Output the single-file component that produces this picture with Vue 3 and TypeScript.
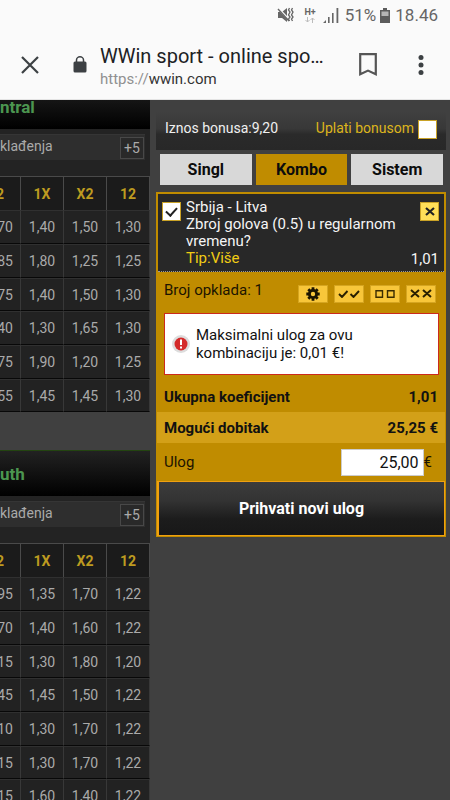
<script setup lang="ts">
import { ref } from 'vue'

interface Market {
  title: string
  rows: string[][]
}

const heads: string[] = ['2', '1X', 'X2', '12']

const markets: Market[] = [
  {
    title: 'ntral',
    rows: [
      ['70', '1,40', '1,50', '1,30'],
      ['85', '1,80', '1,25', '1,25'],
      ['75', '1,40', '1,50', '1,30'],
      ['40', '1,30', '1,65', '1,30'],
      ['75', '1,90', '1,20', '1,25'],
      ['55', '1,45', '1,45', '1,30'],
    ],
  },
  {
    title: 'uth',
    rows: [
      ['95', '1,35', '1,70', '1,22'],
      ['70', '1,40', '1,60', '1,22'],
      ['15', '1,30', '1,80', '1,20'],
      ['45', '1,45', '1,50', '1,22'],
      ['10', '1,30', '1,70', '1,22'],
      ['15', '1,30', '1,70', '1,22'],
      ['15', '1,60', '1,40', '1,22'],
    ],
  },
]

const tabs: string[] = ['Singl', 'Kombo', 'Sistem']
const activeTab = ref('Kombo')
const useBonus = ref(false)
const selected = ref(true)
const stake = ref('25,00')
</script>

<template>
  <div class="screen">
    <header class="top">
      <div class="status">
        <svg class="mute" width="17" height="16" viewBox="0 0 17 16">
          <path d="M1 5h4l5-4v14l-5-4H1z" fill="#666" />
          <path d="M1 1l12 13" stroke="#fafafa" stroke-width="2.4" />
          <path d="M1 2l11 12" stroke="#666" stroke-width="1.4" />
          <path d="M12.500 1l-1 2 1.500 2-1.500 3 1.500 2-1.500 2 1 2M15.500 1l-1 2 1.500 2-1.500 3 1.500 2-1.500 2 1 2" fill="none" stroke="#666" stroke-width="1.300" />
        </svg>
        <span class="net">
          <b>H+</b>
          <svg width="10" height="6" viewBox="0 0 10 6">
            <path d="M2.500 0v5M.5 3l2 2 2-2M7.500 6V1M5.500 3l2-2 2 2" fill="none" stroke="#bbb" />
          </svg>
        </span>
        <svg class="signal" width="16" height="15" viewBox="0 0 16 15">
          <path d="M0 15l3-3v3zM5 9h1.600v6H5zM9 5h1.600v10H9zM13.500 0h1.800v15h-1.800z" fill="#666" />
        </svg>
        <span class="pct">51%</span>
        <svg class="battery" width="10" height="15" viewBox="0 0 10 15">
          <path d="M3 0h4v2h3v13H0V2h3z" fill="#5c5c5c" />
          <path d="M1.500 3.500h7V8h-7z" fill="#b5b5b5" />
        </svg>
        <span>18.46</span>
      </div>
      <div class="bar">
        <button class="icon close" type="button" aria-label="Zatvori">
          <svg width="18" height="18" viewBox="0 0 18 18">
            <path d="M1 1l16 16M17 1L1 17" stroke="#3c4043" stroke-width="2.200" />
          </svg>
        </button>
        <svg class="lock" width="14" height="17" viewBox="0 0 14 17">
          <path d="M3.500 7V4a3.500 3.200 0 0 1 7 0v3" fill="none" stroke="#3c4043" stroke-width="1.500" />
          <rect x=".5" y="5.500" width="13" height="11" rx="1.500" fill="#3c4043" />
        </svg>
        <div class="page">
          <div class="title">WWin sport - online spo…</div>
          <div class="url"><span>https://</span>wwin.com</div>
        </div>
        <button class="icon mark" type="button" aria-label="Oznaka">
          <svg width="18" height="23" viewBox="0 0 18 23">
            <path d="M1.200 1.200h15.600v20L9 17.600l-7.800 3.600z" fill="none" stroke="#555" stroke-width="2.200" />
          </svg>
        </button>
        <button class="icon more" type="button" aria-label="Izbornik">
          <svg width="6" height="20" viewBox="0 0 6 20">
            <circle cx="3" cy="2.500" r="2.500" fill="#3c4043" />
            <circle cx="3" cy="10" r="2.500" fill="#3c4043" />
            <circle cx="3" cy="17.500" r="2.500" fill="#3c4043" />
          </svg>
        </button>
      </div>
    </header>

    <main class="body">
      <section class="offers">
        <article v-for="m in markets" :key="m.title" class="market">
          <h2>{{ m.title }}</h2>
          <div class="sub">
            <span>klađenja</span>
            <button type="button">+5</button>
          </div>
          <table>
            <thead>
              <tr>
                <th v-for="h in heads" :key="h">{{ h }}</th>
              </tr>
            </thead>
            <tbody>
              <tr v-for="(r, i) in m.rows" :key="i">
                <td v-for="(c, j) in r" :key="j">{{ c }}</td>
              </tr>
            </tbody>
          </table>
        </article>
      </section>

      <aside class="side">
        <div class="bonus">
          <span>Iznos bonusa:9,20</span>
          <label><span>Uplati bonusom</span><input v-model="useBonus" type="checkbox" class="box" /></label>
        </div>
        <nav class="tabs">
          <button
            v-for="t in tabs"
            :key="t"
            type="button"
            :class="{ active: t === activeTab }"
            @click="activeTab = t"
          >{{ t }}</button>
        </nav>

        <div class="slip">
          <div class="bet">
            <input id="pick" v-model="selected" type="checkbox" class="box" />
            <label for="pick" class="text">
              Srbija - Litva<br />Zbroj golova (0.5) u regularnom vremenu?<br /><em>Tip:Više</em>
            </label>
            <div class="end">
              <button type="button" aria-label="Ukloni">
                <svg width="10" height="9" viewBox="0 0 10 9">
                  <path d="M1 1l8 7M9 1L1 8" stroke="#222" stroke-width="2.200" />
                </svg>
              </button>
              <span>1,01</span>
            </div>
          </div>

          <div class="count">
            <span>Broj opklada: 1</span>
            <div class="tools">
              <button type="button" aria-label="Postavke">
                <svg width="14" height="14" viewBox="-7 -7 14 14">
                  <circle r="3.600" fill="none" stroke="#1c1400" stroke-width="2.800" />
                  <path d="M0-6.700V-4M0 6.700V4M-6.700 0H-4M6.700 0H4M-4.700-4.700L-3-3M4.700 4.700L3 3M-4.700 4.700L-3 3M4.700-4.700L3-3" stroke="#1c1400" stroke-width="2.800" />
                </svg>
              </button>
              <button type="button" aria-label="Označi sve">
                <svg width="22" height="8" viewBox="0 0 22 8">
                  <path d="M1 4l3 3 5.500-6M12.500 4l3 3L21 1" fill="none" stroke="#2a2000" stroke-width="1.900" />
                </svg>
              </button>
              <button type="button" aria-label="Poništi sve">
                <svg width="20" height="8" viewBox="0 0 20 8">
                  <path d="M1 .7h6.500v6.600H1zM12.500.7H19v6.600h-6.500z" fill="none" stroke="#3a2c00" stroke-width="1.400" />
                </svg>
              </button>
              <button type="button" aria-label="Ukloni sve">
                <svg width="22" height="9" viewBox="0 0 22 9">
                  <path d="M1 1l8 7M9 1L1 8M13 1l8 7M21 1l-8 7" stroke="#2a2000" stroke-width="2" />
                </svg>
              </button>
            </div>
          </div>

          <div class="alert" role="alert">
            <svg width="18" height="18" viewBox="0 0 18 18">
              <circle cx="9" cy="9" r="9" fill="#ddd" />
              <circle cx="9" cy="9" r="6.500" fill="#d42a2a" />
              <path d="M9 4.500v5.500M9 11.500v2" stroke="#fff" stroke-width="2" />
            </svg>
            <p>Maksimalni ulog za ovu kombinaciju je: 0,01 €!</p>
          </div>

          <div class="sum"><span>Ukupna koeficijent</span><span>1,01</span></div>
          <div class="sum light"><span>Mogući dobitak</span><span>25,25 €</span></div>
          <div class="stake">
            <label for="stake">Ulog</label>
            <input id="stake" v-model="stake" type="text" inputmode="decimal" />
            <span>€</span>
          </div>
          <button type="button" class="accept">Prihvati novi ulog</button>
        </div>
      </aside>
    </main>
  </div>
</template>

<style>
body {
  margin: 0;
  background: #404040;
}
</style>

<style scoped>
.screen {
  height: 100vh;
  overflow: hidden;
  display: flex;
  flex-direction: column;
  font-family: Roboto, 'Liberation Sans', sans-serif;
  font-size: 15px;
  background: #404040;
}
.screen * {
  box-sizing: border-box;
}
button,
input {
  font: inherit;
  margin: 0;
  padding: 0;
  border: 0;
  border-radius: 0;
}
svg {
  display: block;
  flex: none;
}
.top {
  flex: none;
  height: 100px;
  background: #fafafa;
  border-bottom: 1px solid #e4e4e4;
}
.status {
  height: 30px;
  padding-right: 12px;
  display: flex;
  justify-content: flex-end;
  align-items: center;
  font-size: 17px;
  color: #666;
}
.net {
  margin: 0 7px 0 10px;
  display: flex;
  flex-direction: column;
  align-items: center;
  font-size: 9px;
  line-height: 9px;
}
.pct {
  margin-left: 6px;
}
.battery {
  margin: 0 5px 0 4px;
}
.bar {
  height: 69px;
  display: flex;
  align-items: center;
  padding: 0 26px 0 21px;
}
.icon {
  background: none;
}
.lock {
  margin: 0 13px 0 34px;
}
.page {
  flex: 1;
  min-width: 0;
  padding-top: 4px;
  white-space: nowrap;
}
.title {
  font-size: 20px;
  line-height: 24px;
  color: #202124;
}
.url {
  font-size: 15px;
  line-height: 22px;
  color: #333;
}
.url span {
  color: #909090;
}
.more {
  margin-left: 41px;
}
.body {
  flex: 1;
  min-height: 0;
  display: grid;
  grid-template-columns: 1fr 2fr;
}
.offers {
  min-width: 0;
  overflow: hidden;
  display: flex;
  flex-direction: column;
  justify-content: flex-start;
  gap: 38px;
  color: #aaa;
  font-size: 14px;
}
.market {
  flex: none;
  background: #232323;
}
h2 {
  margin: 0;
  height: 46px;
  border-top: 1px solid #234410;
  background: linear-gradient(#222, #000);
  color: #4c9650;
  font-size: 17px;
  line-height: 46px;
  font-weight: 700;
}
.market:first-child h2 {
  height: 29px;
  border-top: 0;
  line-height: 14px;
  background: linear-gradient(#151515, #000);
}
.sub {
  height: 26px;
  margin: 5px 5px 16px 0;
  padding-right: 1px;
  display: flex;
  align-items: center;
  justify-content: space-between;
  background: #2e2e2e;
  border-top: 1px solid #353535;
}
.sub span {
  line-height: 22px;
  padding-bottom: 4px;
}
.sub button {
  width: 24px;
  height: 22px;
  border: 1px solid #484848;
  background: #292929;
  color: #aaa;
}
table {
  width: calc(100% + 22px);
  margin-left: -22px;
  table-layout: fixed;
  border-collapse: separate;
  border-spacing: 0;
  background: #222;
}
tr {
  height: 34px;
}
tbody tr:nth-child(3n) {
  height: 33px;
}
th,
td {
  padding: 0;
  text-align: center;
  border-right: 1px solid #383838;
  border-top: 1px solid #303030;
}
td {
  border-bottom: 1px solid #080808;
}
th {
  background: #1b1b1b;
  color: #bd9b20;
  font-weight: 700;
  border-top-color: #4a4a4a;
  border-right-color: #4a4a4a;
}
th:first-child,
td:first-child {
  text-align: right;
  padding-right: 7px;
}
th:first-child {
  padding-right: 16px;
}
.side {
  padding: 11px 4px 0 6px;
  min-width: 0;
}
.bonus {
  height: 39px;
  padding: 0 9px 2px;
  display: flex;
  align-items: center;
  justify-content: space-between;
  background: linear-gradient(#404040, #383838 45%, #2a2a2a 60%, #282828);
  color: #f0f0f0;
  font-size: 14px;
}
.bonus label {
  display: flex;
  align-items: center;
  gap: 4px;
  color: #ddb51c;
}
.bonus span {
  line-height: 18px;
  padding-bottom: 3px;
}
.box {
  appearance: none;
  flex: none;
  width: 19px;
  height: 19px;
  border: 1px solid #c9a227;
  background: #fff;
}
.box:checked {
  display: grid;
  place-items: center;
}
.box:checked::after {
  content: '';
  width: 5px;
  height: 9px;
  margin-bottom: 2px;
  border: solid #222;
  border-width: 0 2px 2px 0;
  transform: rotate(42deg);
}
.tabs {
  margin: 4px 3px 7px 4px;
  display: grid;
  grid-template-columns: repeat(3, 1fr);
  gap: 4px;
}
.tabs button {
  height: 31px;
  background: #d8d8d8;
  color: #0c0c0c;
  font-size: 16px;
  font-weight: 700;
}
.tabs button.active {
  background: #c08c00;
}
.slip {
  border: 1px solid #c08c00;
  background: #c08c00;
}
.bet {
  margin: 1px 1px 0;
  display: flex;
  padding: 3px 5px 2px 4px;
  background: #282828;
  border-bottom: 1px dotted #999;
  color: #f5f5f5;
  line-height: 17px;
}
.bet .box {
  margin: 5px 5px 0 0;
}
.bet .text {
  flex: 1;
  min-width: 0;
  padding: 2px 0;
}
.bet em {
  font-style: normal;
  color: #f1cc14;
}
.end {
  display: flex;
  flex-direction: column;
  justify-content: space-between;
  align-items: flex-end;
  padding: 5px 0 1px;
}
.end button {
  width: 19px;
  height: 19px;
  display: grid;
  place-items: center;
  background: #ffdf58;
  border: 1px solid #c9a227;
}
.count {
  height: 41px;
  padding: 0 9px 0 7px;
  display: flex;
  justify-content: space-between;
  color: #1c1400;
}
.count > span {
  line-height: 37px;
}
.tools {
  display: flex;
  align-items: center;
  gap: 6px;
  padding-top: 2px;
}
.tools button {
  width: 30px;
  height: 18px;
  display: grid;
  place-items: center;
  background: #f8c63a;
  border: 1px solid #d5a520;
}
.alert {
  margin: 0 6px 6px 7px;
  padding: 12px 7px;
  display: flex;
  align-items: center;
  gap: 5px;
  background: #fff;
  border: 1px solid #cc2a1c;
}
.alert p {
  flex: 1;
  margin: 0;
  padding: 0 60px 0 1px;
  line-height: 18px;
  color: #111;
}
.sum {
  height: 31px;
  padding: 0 7px;
  display: flex;
  align-items: center;
  justify-content: space-between;
  font-weight: 700;
  color: #111;
}
.sum.light {
  background: #d3a018;
}
.stake {
  height: 38px;
  padding: 0 13px 0 7px;
  display: flex;
  align-items: center;
  color: #1c1400;
}
.stake label {
  flex: 1;
}
.stake input {
  width: 83px;
  height: 27px;
  padding-right: 4px;
  border: 1px solid #ccc;
  background: #fff;
  text-align: right;
  font-size: 16px;
  color: #111;
}
.accept {
  display: block;
  width: 100%;
  height: 55px;
  border: 1px solid #f0a010;
  border-left-width: 2px;
  background: linear-gradient(#3c3c3c, #333 35%, #1c1c1c 70%, #181818);
  color: #fff;
  font-size: 16px;
  font-weight: 700;
}
</style>
